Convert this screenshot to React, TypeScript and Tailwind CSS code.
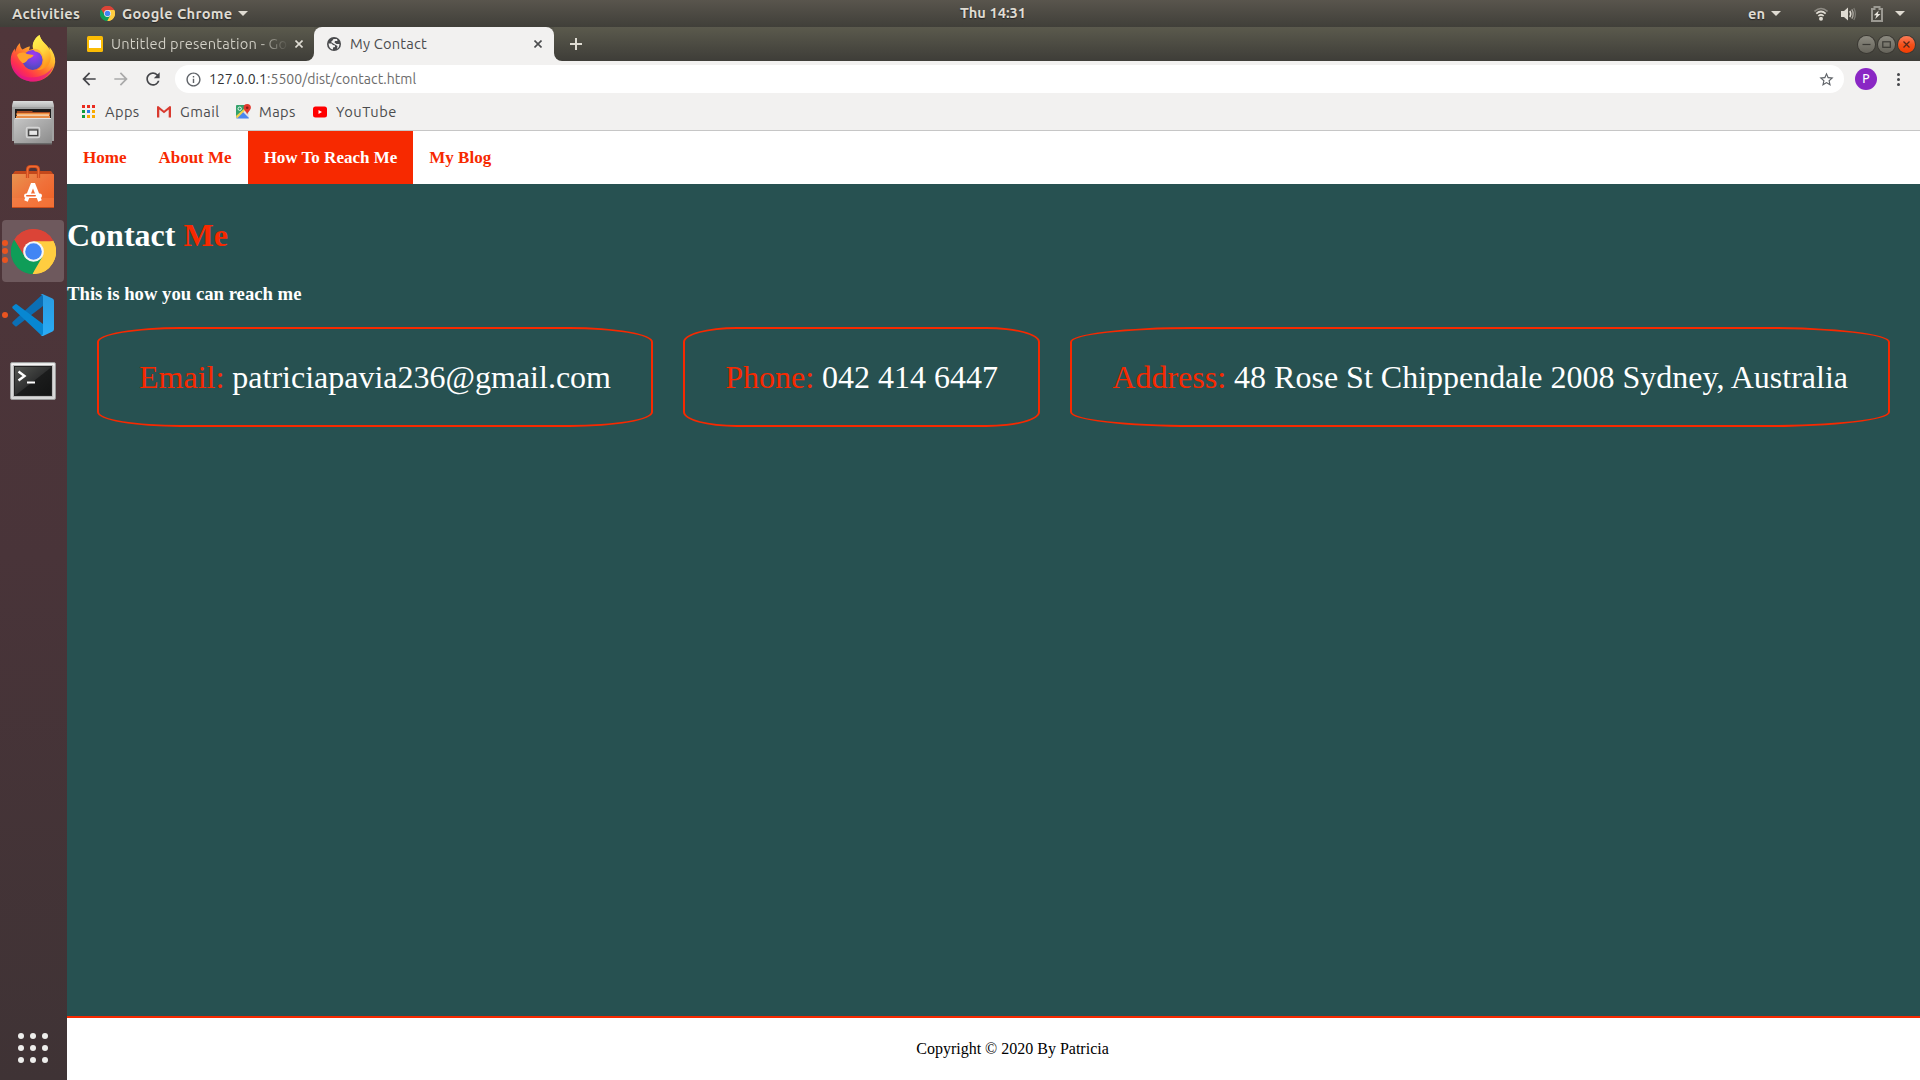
import React from "react";
import {
  MdArrowBack,
  MdArrowForward,
  MdRefresh,
  MdInfoOutline,
  MdStarBorder,
} from "react-icons/md";

function ChromeLogo({ size }: { size: number }) {
  return (
    <svg width={size} height={size} viewBox="0 0 48 48" className="shrink-0">
      <path d="M24 24 L3.2 12 A24 24 0 0 1 44.8 12 Z" fill="#db4437" />
      <path d="M24 24 L24 48 A24 24 0 0 1 3.2 12 Z" fill="#0f9d58" />
      <path d="M24 24 L44.8 12 A24 24 0 0 1 24 48 Z" fill="#ffcd40" />
      <path d="M24 13 H45.3 A24 24 0 0 0 3.2 12 L14.5 29.5 Z" fill="#db4437" />
      <path d="M33.5 29.5 L22.8 48 A24 24 0 0 0 45.3 13 H24 Z" fill="#ffcd40" />
      <path d="M14.5 29.5 L3.6 11.4 A24 24 0 0 0 22.8 48 L33.5 29.5 Z" fill="#0f9d58" />
      <circle cx="24" cy="24" r="11" fill="#f5f5f5" />
      <circle cx="24" cy="24" r="8.8" fill="#4285f4" />
    </svg>
  );
}

function FirefoxIcon() {
  return (
    <svg width="46" height="48" viewBox="0 0 46 48">
      <defs>
        <linearGradient id="ff-body" x1="0.85" y1="0.1" x2="0.2" y2="0.95">
          <stop offset="0" stopColor="#fff44f" />
          <stop offset="0.32" stopColor="#ffb52d" />
          <stop offset="0.58" stopColor="#ff6b2d" />
          <stop offset="0.8" stopColor="#ff3050" />
          <stop offset="1" stopColor="#e31587" />
        </linearGradient>
        <radialGradient id="ff-globe" cx="0.55" cy="0.25" r="0.75">
          <stop offset="0" stopColor="#a238f5" />
          <stop offset="0.6" stopColor="#6b45d8" />
          <stop offset="1" stopColor="#4b48b8" />
        </radialGradient>
        <linearGradient id="ff-tail" x1="0.3" y1="0" x2="0.7" y2="1">
          <stop offset="0" stopColor="#fff44f" />
          <stop offset="0.5" stopColor="#ffd33c" />
          <stop offset="1" stopColor="#ff8a16" />
        </linearGradient>
      </defs>
      <path
        d="M10 9 C10 12 10.500 14 12.500 15.500 C15 14 18 12.500 20 12.500 L19 16 L23 15 C22 9 25 4 29.500 1 C31 7 35 9 38 13 C39 14 39 15 39.500 16 L39.500 13 C43.500 18 45.500 23 45.200 28 C44 40 34 47.500 23 47.500 C10.500 47.500 1 38 0.700 26.500 C0.600 21 2.500 17 5 14.500 L5.300 18 C6 14 7.500 11 10 9 Z"
        fill="url(#ff-body)"
      />
      <path
        d="M29.500 1 C23.500 5 21.500 11 23.500 15 C29 16 32 19 33.500 24 C34.500 29 32 34 27 36 C37 36 43 28 40 18 C38.500 11 31.500 9 29.500 1Z"
        fill="url(#ff-tail)"
      />
      <circle cx="22.600" cy="26" r="10" fill="url(#ff-globe)" />
      <path
        d="M7 21 C10 18 14 18 17 20 L23.500 21 C23 24 18.500 24 17.500 26 C16 28.500 14 29 12.500 29 C10 27 8 24 7 21 Z"
        fill="#ffa12b"
      />
      <path d="M23 15 C29 14 33 19 33 25 C32 20 29 18 25 17.500 Z" fill="#ffb33a" />
      <path
        d="M2 31 C5 39 12 43.500 21 43.500 C31 43.500 39 39 43.500 32 C40 42 32 47.500 23 47.500 C13 47.500 4.500 41 2 31Z"
        fill="#e0168a"
        opacity="0.65"
      />
    </svg>
  );
}

function FilesIcon() {
  return (
    <svg width="42" height="44" viewBox="0 0 42 44">
      <defs>
        <linearGradient id="fl-top" x1="0" y1="0" x2="0" y2="1">
          <stop offset="0" stopColor="#dcdcdc" />
          <stop offset="1" stopColor="#b5b5b5" />
        </linearGradient>
        <linearGradient id="fl-front" x1="0" y1="0" x2="1" y2="1">
          <stop offset="0" stopColor="#c6c6c6" />
          <stop offset="1" stopColor="#8b8b8b" />
        </linearGradient>
      </defs>
      <path d="M2 0 H40 Q41 0 41 1 L42 5 V40 H0 V5 L1 1 Q1 0 2 0Z" fill="#a2a2a2" />
      <path d="M2 0 H40 Q41 0 41 1 L42 6 H0 L1 1 Q1 0 2 0Z" fill="url(#fl-top)" />
      <rect x="3" y="8" width="36" height="10" fill="#1d1b1b" />
      <path d="M5 10 H20 L21 11 H38 V18 H4 Z" fill="#a84a22" />
      <rect x="4.500" y="12" width="33" height="2" fill="#ef8f3f" />
      <rect x="5" y="13.500" width="32" height="1.300" fill="#ffe9c8" />
      <rect x="4" y="15" width="34" height="3" fill="#e88b45" />
      <path d="M3 17 H39 L40 19 V43 H2 V19 Z" fill="url(#fl-front)" />
      <path d="M3 17.500 H39" stroke="#e2e2e2" />
      <rect x="2" y="42" width="38" height="1.500" fill="#696969" />
      <rect x="14.500" y="26.500" width="13" height="10" rx="1.500" fill="#a5a5a5" stroke="#d5d5d5" strokeWidth="1.500" />
      <rect x="16.700" y="29" width="9" height="5.500" fill="#e6e6e6" stroke="#3f3f3f" strokeWidth="1.200" />
    </svg>
  );
}

function SoftwareIcon() {
  return (
    <svg width="42" height="44" viewBox="0 0 42 44">
      <defs>
        <linearGradient id="sw-bag" x1="0" y1="0" x2="1" y2="1">
          <stop offset="0" stopColor="#e8944f" />
          <stop offset="0.5" stopColor="#f0713a" />
          <stop offset="1" stopColor="#ee5f22" />
        </linearGradient>
      </defs>
      <path d="M3 6 H39 L42 10 H0 Z" fill="#c4481b" />
      <rect x="0" y="9" width="42" height="34" rx="0.500" fill="url(#sw-bag)" />
      <rect x="0" y="33" width="42" height="10" fill="#f9824a" opacity="0.45" />
      <rect x="0" y="42" width="42" height="1" fill="#c84c1c" />
      <path d="M15.500 13 V5 Q15.500 1.500 19 1.500 H23 Q26.500 1.500 26.500 5 V13" fill="none" stroke="#c9491c" strokeWidth="3.200" />
      <path d="M15.500 13 V5 Q15.500 1.500 19 1.500 H23 Q26.500 1.500 26.500 5 V13" fill="none" stroke="#ef6c34" strokeWidth="1.500" />
      <path d="M14 36 L20.300 20 H21.700 L28 36" fill="none" stroke="#fff" strokeWidth="3.800" />
      <rect x="12" y="28.500" width="18" height="4.500" rx="2.200" fill="#fff" />
      <rect x="14" y="30" width="10" height="1.600" rx="0.800" fill="#ef6630" />
    </svg>
  );
}

function CodeIcon() {
  return (
    <svg width="42" height="42" viewBox="0 0 42 42">
      <defs>
        <linearGradient id="vs-right" x1="0" y1="0" x2="0" y2="1">
          <stop offset="0" stopColor="#2a9be0" />
          <stop offset="1" stopColor="#2aacf6" />
        </linearGradient>
      </defs>
      <path d="M31 0 L31 12 L5 32 Q4 33 3 32 L0.500 29.700 Q0 29 0.500 28 Z" fill="#0b6fb5" />
      <path d="M31 42 L31 30 L5 10.500 Q4 9.700 3 10.500 L0.500 12.500 Q0 13.500 0.500 14.200 L29 41 Z" fill="#0787d2" />
      <path d="M31 0.200 L40.500 4.500 Q42 5.200 42 6.800 V35.200 Q42 36.800 40.500 37.500 L31 41.900 Q29.500 42.200 28.500 41 Q31 42 31 39 V3 Q31 0 28.500 1 Q29.500 -0.200 31 0.200Z" fill="url(#vs-right)" />
    </svg>
  );
}

function TerminalIcon() {
  return (
    <svg width="46" height="42" viewBox="0 0 46 42">
      <defs>
        <linearGradient id="tm-screen" x1="0" y1="0" x2="1" y2="1">
          <stop offset="0" stopColor="#555753" />
          <stop offset="0.5" stopColor="#303131" />
          <stop offset="0.520" stopColor="#1b1c1c" />
          <stop offset="1" stopColor="#131414" />
        </linearGradient>
      </defs>
      <rect x="0.500" y="2.500" width="45" height="37" rx="1.500" fill="#d8d8d8" stroke="#9a9a9a" />
      <rect x="1.500" y="3.500" width="43" height="2" fill="#f6f6f6" />
      <rect x="3.500" y="5.500" width="39" height="31" fill="#f2f2f2" stroke="#b0b0b0" strokeWidth="0.800" />
      <rect x="4.500" y="6.500" width="37" height="29" fill="url(#tm-screen)" stroke="#222" />
      <path d="M8.500 11.500 L14.500 16 L8.500 20.500" fill="none" stroke="#fff" strokeWidth="2.400" />
      <rect x="17" y="21.500" width="8" height="2" fill="#fff" />
    </svg>
  );
}

function DockItem({
  children,
  dots = 0,
  active = false,
}: {
  children: React.ReactNode;
  dots?: number;
  active?: boolean;
}) {
  return (
    <div className="relative flex h-16 w-[67px] items-center pl-[2px]">
      <div
        className={
          active
            ? "flex h-[62px] w-[62px] items-center justify-center rounded-[4px] bg-[#6e595d]"
            : "flex h-[62px] w-[62px] items-center justify-center"
        }
      >
        {children}
      </div>
      {dots > 0 && (
        <div className="absolute left-[2px] top-0 flex h-full flex-col items-center justify-center gap-[2.500px]">
          {Array.from({ length: dots }, (_, i) => (
            <span key={i} className="h-[6px] w-[6px] rounded-full bg-[#e95420]" />
          ))}
        </div>
      )}
    </div>
  );
}

function Dock() {
  return (
    <aside className="flex w-[67px] shrink-0 flex-col bg-linear-to-b from-[#50363a] via-[#493439] to-[#3f3335]">
      <DockItem>
        <div className="pb-[3px]">
          <FirefoxIcon />
        </div>
      </DockItem>
      <DockItem>
        <FilesIcon />
      </DockItem>
      <DockItem>
        <SoftwareIcon />
      </DockItem>
      <DockItem dots={3} active>
        <ChromeLogo size={45} />
      </DockItem>
      <DockItem dots={1}>
        <CodeIcon />
      </DockItem>
      <DockItem>
        <div className="pt-1">
          <TerminalIcon />
        </div>
      </DockItem>
      <div className="mt-auto mb-[17px] grid grid-cols-[6px_6px_6px] gap-[6px] self-start pl-[18px]">
        {Array.from({ length: 9 }, (_, i) => (
          <span key={i} className="h-[6px] w-[6px] rounded-full bg-[#eeeeec]" />
        ))}
      </div>
    </aside>
  );
}

function Caret() {
  return (
    <svg width="10" height="5" viewBox="0 0 10 5" className="shrink-0">
      <path d="M0 0 H10 L5 5 Z" fill="#dfdbd2" />
    </svg>
  );
}

function TopBar() {
  return (
    <header className="grid h-[27px] grid-cols-[960px_68px_1fr] items-center bg-linear-to-b from-[#59554d] to-[#403f39] text-[14.670px] font-bold leading-none text-[#dfdbd2] [text-shadow:0_1px_1px_#222]">
      <div className="flex items-center">
        <span className="ml-3 w-[88px] whitespace-nowrap pt-px tracking-[0.300px]">Activities</span>
        <ChromeLogo size={15} />
        <span className="ml-[7px] w-[116px] whitespace-nowrap pt-px tracking-[0.300px]">Google Chrome</span>
        <Caret />
      </div>
      <span className="whitespace-nowrap">Thu 14:31</span>
      <div className="flex items-center pr-[15px]">
        <span className="ml-auto mr-[6px] pt-px">en</span>
        <Caret />
        <svg width="14" height="14" viewBox="0 0 14 14" className="ml-[33px]" fill="none">
          <path d="M0.500 4.500 Q7 -1.500 13.500 4.500" stroke="#8e8b84" strokeWidth="1.600" />
          <path d="M2.300 6.700 Q7 2.300 11.700 6.700" stroke="#dfdbd2" strokeWidth="1.700" />
          <path d="M4.300 9 Q7 6.500 9.700 9" stroke="#dfdbd2" strokeWidth="1.700" />
          <circle cx="7" cy="11.800" r="2" fill="#dfdbd2" />
        </svg>
        <svg width="16" height="14" viewBox="0 0 16 14" className="ml-[13px]" fill="none">
          <path d="M0 4 H3 L7 0.500 V13.500 L3 10 H0 Z" fill="#dfdbd2" />
          <path d="M8.800 4 Q10.800 7 8.800 10" stroke="#dfdbd2" strokeWidth="1.500" />
          <path d="M10.800 2.300 Q13.500 7 10.800 11.700" stroke="#aaa79f" strokeWidth="1.400" />
          <path d="M12.800 1 Q16 7 12.800 13" stroke="#7d7b74" strokeWidth="1.300" />
        </svg>
        <svg width="12" height="16" viewBox="0 0 12 16" className="ml-[14px]" fill="none">
          <path d="M1 3 H3.500 V1 H8.500 V3 H11 V15 H1 Z" stroke="#9b9992" strokeWidth="2" />
          <path d="M7.800 4.500 L2.800 9.200 H5.500 L4.200 13 L9.500 8 H6.700 Z" fill="#e8e5dd" />
        </svg>
        <span className="ml-3 flex">
          <Caret />
        </span>
      </div>
    </header>
  );
}

function Cross({ color }: { color: string }) {
  return (
    <svg width="8" height="8" viewBox="0 0 8 8" className="shrink-0">
      <path d="M0.500 0.500 L7.500 7.500 M7.500 0.500 L0.500 7.500" stroke={color} strokeWidth="1.600" />
    </svg>
  );
}

function TabStrip() {
  return (
    <div className="flex h-[34px] items-stretch bg-[#f2f1f0]">
      <div className="flex w-[247px] items-center rounded-br-[8px] bg-linear-to-b from-[#5b5a4d] to-[#3e3d38] pl-5 pr-[11px]">
        <span className="flex h-4 w-4 items-center justify-center rounded-[1.500px] bg-[#fbbc04]">
          <span className="h-2 w-3 bg-white" />
        </span>
        <span className="ml-2 w-[178px] overflow-hidden whitespace-nowrap bg-linear-to-r from-[#d4d2c8] from-82% to-transparent bg-clip-text text-[14.670px] leading-6 tracking-[0.200px] text-transparent">
          Untitled presentation - Go
        </span>
        <span className="ml-auto">
          <Cross color="#dfdcd3" />
        </span>
      </div>
      <div className="flex w-[240px] bg-[#56554a]">
        <div className="flex w-full items-center rounded-t-[8px] bg-[#f2f1f0] pl-[13px] pr-3">
          <svg width="14" height="14" viewBox="0 0 14 14">
            <circle cx="7" cy="7" r="7" fill="#4a4b4d" />
            <path d="M1.500 6.500 H4.500 L6 8 L8 8.500 V10 L6 10.500 V12.500 Q2 12 1.500 6.500 Z M6.500 2 L10 2 L10.500 4 H8 L7.500 5.500 L9.500 7 H12.500 Q12.500 10.500 10 12 L10.500 9 L7 7 L4 5 L5.500 3.500 Z" fill="#f2f1f0" />
          </svg>
          <span className="ml-[9px] whitespace-nowrap text-[14.670px] leading-6 tracking-[0.200px] text-[#4b4c4e]">My Contact</span>
          <span className="ml-auto">
            <Cross color="#4b4c4e" />
          </span>
        </div>
      </div>
      <div className="flex flex-1 items-center rounded-bl-[8px] bg-linear-to-b from-[#5b5a4d] to-[#3e3d38] pl-4">
        <svg width="12" height="12" viewBox="0 0 12 12">
          <path d="M6 0 V12 M0 6 H12" stroke="#dfdcd3" strokeWidth="2" />
        </svg>
        <div className="ml-auto flex gap-[3px] pr-[5px]">
          <WindowButton>
            <path d="M4.500 8.500 H12.500" />
          </WindowButton>
          <WindowButton>
            <rect x="4.800" y="5.800" width="7.500" height="5.500" />
          </WindowButton>
          <span className="flex h-[17px] w-[17px] rounded-full bg-linear-to-b from-[#fb7c55] via-[#f4511a] to-[#f23c00] shadow-[0_0_0_1px_#3a3833]">
            <svg width="17" height="17" viewBox="0 0 17 17" fill="none" stroke="#54281a" strokeWidth="1.300">
              <path d="M5.500 5.500 L11.500 11.500 M11.500 5.500 L5.500 11.500" />
            </svg>
          </span>
        </div>
      </div>
    </div>
  );
}

function WindowButton({ children }: { children: React.ReactNode }) {
  return (
    <span className="flex h-[17px] w-[17px] rounded-full bg-linear-to-b from-[#8c8a80] to-[#66645b] shadow-[0_0_0_1px_#3a3833]">
      <svg width="17" height="17" viewBox="0 0 17 17" fill="none" stroke="#3b3a35" strokeWidth="1.200">
        {children}
      </svg>
    </span>
  );
}

function Toolbar() {
  return (
    <div className="flex h-9 items-center bg-[#f2f1f0] pl-3">
      <MdArrowBack size={20} color="#45464a" />
      <MdArrowForward size={20} color="#a9a9a9" className="ml-3" />
      <MdRefresh size={20} color="#45464a" className="ml-3" />
      <div className="ml-3 flex h-7 w-[1669px] items-center rounded-full bg-white pl-[9.500px] pr-[9.500px]">
        <MdInfoOutline size={17} color="#5f6368" />
        <span className="ml-[7.500px] whitespace-nowrap text-[14px] tracking-[0.030px] text-[#6c6c6c]">
          <span className="text-[#303134]">127.0.0.1</span>:5500/dist/contact.html
        </span>
        <MdStarBorder size={17} color="#5f6368" className="ml-auto" />
      </div>
      <span className="ml-[11px] flex h-[22px] w-[22px] items-center justify-center rounded-full bg-[#8a27c4] text-xs font-medium text-white">
        P
      </span>
      <span className="ml-5 flex flex-col gap-[2px]">
        <i className="h-[3px] w-[3px] rounded-full bg-[#45464a]" />
        <i className="h-[3px] w-[3px] rounded-full bg-[#45464a]" />
        <i className="h-[3px] w-[3px] rounded-full bg-[#45464a]" />
      </span>
    </div>
  );
}

function Bookmarks() {
  return (
    <div className="flex h-[34px] items-center border-b border-[#c6c6c6] bg-[#f2f1f0] pb-1 pl-[15px] text-[14.670px] leading-none text-[#4b4c4e]">
      <svg width="13" height="13" viewBox="0 0 13 13">
        <path d="M0 0h3v3h-3z M5 0h3v3h-3z M10 0h3v3h-3z" fill="#ea2b1f" />
        <path d="M0 5h3v3h-3z" fill="#0f9d3c" />
        <path d="M5 5h3v3h-3z" fill="#2b7de9" />
        <path d="M10 5h3v3h-3z M5 10h3v3h-3z M10 10h3v3h-3z" fill="#f9ab00" />
        <path d="M0 10h3v3h-3z" fill="#0f9d3c" />
      </svg>
      <span className="ml-[10px] w-[52px] pt-[2px] tracking-[0.400px]">Apps</span>
      <svg width="14" height="12" viewBox="0 0 14 12">
        <rect width="14" height="11.500" rx="1" fill="#efefef" />
        <path d="M0 1 Q0 0 1.200 0 L7 4.700 L12.800 0 Q14 0 14 1 V11.500 H11.700 V3.500 L7 7.300 L2.300 3.500 V11.500 H0 Z" fill="#d93a2f" />
      </svg>
      <span className="ml-[9px] w-[56px] pt-[2px] tracking-[0.450px]">Gmail</span>
      <svg width="15" height="15" viewBox="0 0 15 15">
        <rect x="0" y="1" width="13" height="13.500" rx="1.200" fill="#e3e6ea" />
        <path d="M1 1 H9 L9 5 L0 13.500 V2 Q0 1 1 1Z" fill="#34a26b" />
        <path d="M0 14 L6.500 7.500 L13 14 Q12.500 14.500 12 14.500 H1 Z" fill="#4a86f0" />
        <path d="M0 12 L9 4 L10 5.500 L1 14.500Z" fill="#f3d34e" />
        <circle cx="3.700" cy="4.700" r="1.700" fill="none" stroke="#e9f5ee" strokeWidth="1" />
        <path d="M11.200 0 A3.700 3.700 0 0 1 14.900 3.700 C14.900 6 12 7.500 11.200 10.500 C10.500 7.500 7.500 6 7.500 3.700 A3.700 3.700 0 0 1 11.200 0Z" fill="#e2392f" />
        <circle cx="11.200" cy="3.700" r="1.300" fill="#8c1d15" />
      </svg>
      <span className="ml-2 w-[54px] pt-[2px] tracking-[0.400px]">Maps</span>
      <svg width="14" height="12" viewBox="0 0 14 12">
        <rect y="0.500" width="14" height="11" rx="2.500" fill="#ff0000" />
        <path d="M5.500 4 L9 6 L5.500 8 Z" fill="#fff" />
      </svg>
      <span className="ml-[9px] pt-[2px] tracking-[0.450px]">YouTube</span>
    </div>
  );
}

function NavLink({ label, active = false }: { label: string; active?: boolean }) {
  return (
    <a
      className={
        active
          ? "flex h-full items-center whitespace-nowrap bg-[#f72900] px-4 text-white"
          : "flex h-full items-center whitespace-nowrap px-4 text-[#f72900]"
      }
    >
      {label}
    </a>
  );
}

function ContactCard({ label, value }: { label: string; value: string }) {
  return (
    <div className="flex h-[100px] items-center whitespace-nowrap rounded-[15%] border-2 border-[#f72900] px-10 text-[32px]">
      <p>
        <span className="text-[#f72900]">{label}</span> {value}
      </p>
    </div>
  );
}

function ContactPage() {
  return (
    <div className="flex flex-1 flex-col font-['Liberation_Serif',serif]">
      <nav className="flex h-[53px] items-stretch bg-white text-[17px] font-bold">
        <NavLink label="Home" />
        <NavLink label="About Me" />
        <NavLink label="How To Reach Me" active />
        <NavLink label="My Blog" />
      </nav>
      <main className="flex-1 bg-[#275151] pt-[33px] text-white">
        <h1 className="text-[32px] font-bold leading-[37px]">
          Contact <span className="text-[#f72900]">Me</span>
        </h1>
        <h3 className="mt-[29px] text-[18.720px] font-bold leading-[22px]">This is how you can reach me</h3>
        <section className="mt-[22px] flex justify-between px-[30px]">
          <ContactCard label="Email:" value="patriciapavia236@gmail.com" />
          <ContactCard label="Phone:" value="042 414 6447" />
          <ContactCard label="Address:" value="48 Rose St Chippendale 2008 Sydney, Australia" />
        </section>
      </main>
      <footer className="flex h-16 items-center justify-center border-t-2 border-[#f72900] bg-white pl-[38px] text-base text-black">
        Copyright © 2020 By Patricia
      </footer>
    </div>
  );
}

export default function App() {
  return (
    <div className="flex h-[1080px] w-[1920px] flex-col overflow-hidden font-['Ubuntu','Noto_Sans',sans-serif]">
      <TopBar />
      <div className="flex flex-1">
        <Dock />
        <div className="flex flex-1 flex-col">
          <TabStrip />
          <Toolbar />
          <Bookmarks />
          <ContactPage />
        </div>
      </div>
    </div>
  );
}
